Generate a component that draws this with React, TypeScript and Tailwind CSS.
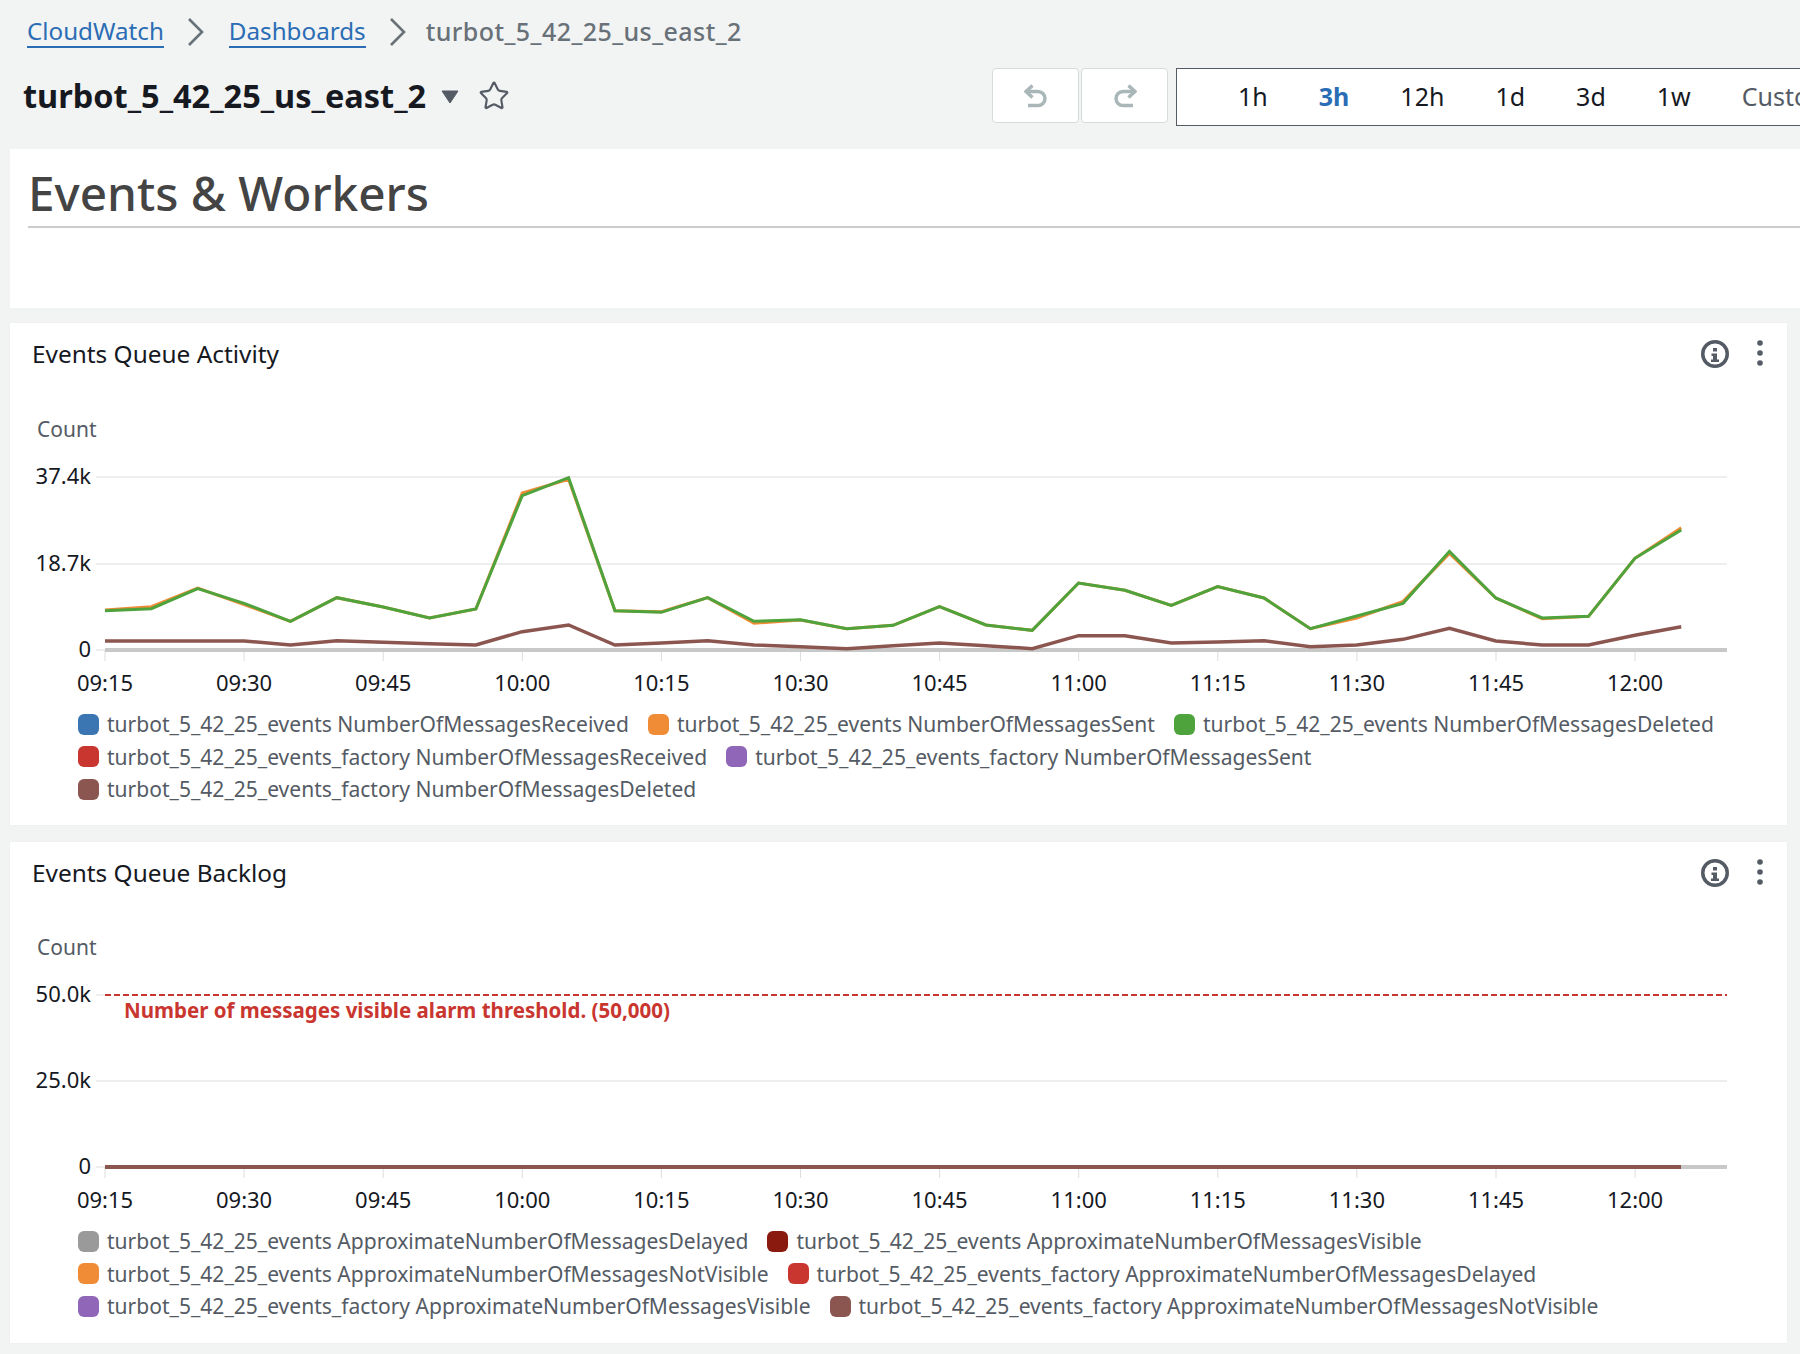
import { Star } from "lucide-react";

const greenY = [632, 626, 566, 610, 664, 593, 621, 654, 627, 287, 233, 632, 637, 593, 664, 659, 686, 676, 620, 675, 691, 549, 571, 616, 560, 594, 686, 648, 610, 454, 594, 654, 649, 475, 390];
const orangeY = [630, 620, 564, 614, 664, 593, 621, 654, 627, 279, 238, 632, 635, 593, 670, 660, 686, 676, 620, 675, 691, 549, 571, 616, 560, 594, 686, 654, 604, 460, 594, 656, 649, 475, 383];
const brownY = [723, 723, 723, 723, 735, 722, 727, 731, 735, 695, 675, 735, 729, 722, 735, 740, 746, 737, 729, 737, 746, 707, 707, 729, 726, 722, 740, 735, 718, 685, 723, 735, 735, 706, 680];

const times = ["09:15", "09:30", "09:45", "10:00", "10:15", "10:30", "10:45", "11:00", "11:15", "11:30", "11:45", "12:00"];

const stepX = 46.36;
const tickX = 139.1;
const plotLeft = 95;
const plotRight = 1717;

// zoomed y values -> svg local y
const toPoints = (ys: number[]) =>
  ys.map((y, i) => `${plotLeft + i * stepX},${y / 3 - 9}`).join(" ");

function ChartFrame({
  height,
  top,
  mid,
  base,
  topLabel,
  midLabel,
  labelY,
  countY,
  children,
}: {
  height: number;
  top: number;
  mid: number;
  base: number;
  topLabel: string;
  midLabel: string;
  labelY: number;
  countY: number;
  children: React.ReactNode;
}) {
  return (
    <svg width={1777} height={height} className="block">
      <text x={27} y={countY} dominantBaseline="middle" fontSize={21} fill="#545b64">Count</text>
      {[top, mid].map((y) => (
        <line key={y} x1={86} x2={plotRight} y1={y} y2={y} stroke="#eeeeee" strokeWidth={2} />
      ))}
      <line x1={86} x2={plotLeft} y1={base} y2={base} stroke="#eeeeee" strokeWidth={2} />
      <text x={81} y={top + 1} dominantBaseline="middle" textAnchor="end" fontSize={22} fill="#16191f">{topLabel}</text>
      <text x={81} y={mid + 1} dominantBaseline="middle" textAnchor="end" fontSize={22} fill="#16191f">{midLabel}</text>
      <text x={81} y={base + 1} dominantBaseline="middle" textAnchor="end" fontSize={22} fill="#16191f">0</text>
      {times.map((t, i) => (
        <g key={t}>
          <line x1={plotLeft + i * tickX} x2={plotLeft + i * tickX} y1={base} y2={base + 11} stroke="#dddddd" />
          <text x={plotLeft + i * tickX} y={labelY} dominantBaseline="middle" textAnchor="middle" fontSize={22} fill="#16191f">{t}</text>
        </g>
      ))}
      <line x1={plotLeft} x2={plotRight} y1={base} y2={base} stroke="#c8c8c8" strokeWidth={4} />
      {children}
    </svg>
  );
}

function Legend({ items }: { items: { color: string; label: string }[] }) {
  return (
    <div className="flex flex-wrap w-[1660px] ml-[68px] gap-x-[19px] text-[21.05px] leading-[32.5px] text-[#545b64]">
      {items.map((item) => (
        <div key={item.label} className="flex items-center gap-[8px] whitespace-nowrap">
          <span className={`w-[21px] h-[21px] rounded-[6px] ${item.color}`} />
          {item.label}
        </div>
      ))}
    </div>
  );
}

function Widget({ title, height, children }: { title: string; height: string; children: React.ReactNode }) {
  return (
    <section className={`w-[1777px] ml-[10px] bg-white shadow-[0_0_1px_rgba(0,0,0,0.08)] ${height}`}>
      <div className="h-[86px] flex items-start justify-between pl-[22px] pr-[22px] pt-[14px]">
        <h2 className="text-[24.4px] leading-[34px] text-[#16191f]">{title}</h2>
        <div className="flex items-center gap-[25px] pt-[2px]">
          <svg width="30" height="30" viewBox="0 0 30 30" fill="none">
            <circle cx="15" cy="15" r="12.25" stroke="#545b64" strokeWidth="3.5" />
            <rect x="13" y="9" width="4" height="3.5" fill="#545b64" />
            <path d="M11.5 14.5h5.5v6h2v2.5h-8v-2.5h2v-3.5h-1.5z" fill="#545b64" />
          </svg>
          <svg width="10" height="30" viewBox="0 0 10 30" fill="#545b64">
            <circle cx="5" cy="4" r="2.8" />
            <circle cx="5" cy="14" r="2.8" />
            <circle cx="5" cy="24" r="2.8" />
          </svg>
        </div>
      </div>
      {children}
    </section>
  );
}

function Chevron({ className }: { className: string }) {
  return (
    <svg width="18" height="28" viewBox="0 0 18 28" fill="none" stroke="#687078" strokeWidth="2.6" className={className}>
      <path d="M2 1l13 13L2 27" />
    </svg>
  );
}

export default function App() {
  return (
    <div className="w-[1800px] h-[1354px] overflow-hidden bg-[#f2f3f3] font-['Noto_Sans',sans-serif]">
      <nav className="h-[62px] flex items-center pl-[27px] pt-[1px] text-[24.2px]">
        <a className="text-[#2b6db5] border-b-2 border-[#2b6db5] leading-[30px]">CloudWatch</a>
        <Chevron className="ml-[23px] mr-[24px]" />
        <a className="text-[#2b6db5] border-b-2 border-[#2b6db5] leading-[30px]">Dashboards</a>
        <Chevron className="ml-[23px] mr-[19px]" />
        <span className="text-[#687078] font-medium text-[25px] tracking-[0.45px]">turbot_5_42_25_us_east_2</span>
      </nav>

      <header className="h-[87px] flex items-start pl-[23px]">
        <h1 className="text-[32.5px] leading-[68px] font-bold text-[#16191f]">turbot_5_42_25_us_east_2</h1>
        <svg width="18" height="14" viewBox="0 0 18 14" fill="#545b64" stroke="#545b64" strokeWidth="1" strokeLinejoin="round" className="ml-[15px] mt-[28px]">
          <path d="M1 1h16L9 13z" />
        </svg>
        <Star size={32} strokeWidth={1.6} className="ml-[19px] mt-[18px] text-[#545b64]" />
        <div className="ml-auto flex mt-[6px]">
          <div className="flex gap-[2px]">
            <button className="w-[87px] h-[55px] bg-white border border-[#d5dbdb] rounded-[4px] flex items-center justify-center">
              <svg width="24" height="24" viewBox="0 0 24 24" fill="none" stroke="#aab7b8" strokeWidth="3.5">
                <path d="M2 7.5h12a7 7 0 0 1 0 14H4" />
                <path d="M8.5 1.5L2 7.5l6.5 6" />
              </svg>
            </button>
            <button className="w-[87px] h-[55px] bg-white border border-[#d5dbdb] rounded-[4px] flex items-center justify-center">
              <svg width="24" height="24" viewBox="0 0 24 24" fill="none" stroke="#aab7b8" strokeWidth="3.5">
                <path d="M22 7.5H10a7 7 0 0 0 0 14h10" />
                <path d="M15.5 1.5l6.5 6-6.5 6" />
              </svg>
            </button>
          </div>
          <div className="w-[624px] h-[58px] ml-[8px] bg-white border border-r-0 border-[#545b64] flex items-center text-[25px] text-[#16191f] overflow-hidden pl-[61px] gap-[51px] whitespace-nowrap">
            <span>1h</span>
            <span className="font-bold text-[#2b6db5]">3h</span>
            <span>12h</span>
            <span>1d</span>
            <span>3d</span>
            <span>1w</span>
            <span className="text-[#545b64]">Custom</span>
          </div>
        </div>
      </header>

      <div className="h-[159px] ml-[10px] bg-white pt-[12px] pl-[18px]">
        <h1 className="text-[47.7px] leading-[64px] font-medium text-[#444444] border-b-2 border-[#cccccc] h-[67px]">Events &amp; Workers</h1>
      </div>

      <div className="flex flex-col gap-[17px] mt-[15px]">
        <Widget title="Events Queue Activity" height="h-[502px]">
          <ChartFrame height={299} top={68} mid={155} base={241} topLabel="37.4k" midLabel="18.7k" labelY={276} countY={22}>
            <polyline points={toPoints(orangeY)} fill="none" stroke="#f08c36" strokeWidth={3} />
            <polyline points={toPoints(greenY)} fill="none" stroke="#4fa33d" strokeWidth={3} />
            <polyline points={toPoints(brownY)} fill="none" stroke="#8c5650" strokeWidth={3.5} />
          </ChartFrame>
          <Legend
            items={[
              { color: "bg-[#3b76b3]", label: "turbot_5_42_25_events NumberOfMessagesReceived" },
              { color: "bg-[#f08c36]", label: "turbot_5_42_25_events NumberOfMessagesSent" },
              { color: "bg-[#4fa33d]", label: "turbot_5_42_25_events NumberOfMessagesDeleted" },
              { color: "bg-[#c9362f]", label: "turbot_5_42_25_events_factory NumberOfMessagesReceived" },
              { color: "bg-[#9067b8]", label: "turbot_5_42_25_events_factory NumberOfMessagesSent" },
              { color: "bg-[#8c5650]", label: "turbot_5_42_25_events_factory NumberOfMessagesDeleted" },
            ]}
          />
        </Widget>

        <Widget title="Events Queue Backlog" height="h-[501px]">
          <ChartFrame height={297} top={67} mid={153} base={239} topLabel="50.0k" midLabel="25.0k" labelY={274} countY={21}>
            <line x1={plotLeft} x2={plotRight} y1={67} y2={67} stroke="#ffffff" strokeWidth={2} />
            <line x1={plotLeft} x2={plotRight} y1={67} y2={67} stroke="#c9362f" strokeWidth={2} strokeDasharray="6 3" />
            <text x={114} y={84} dominantBaseline="middle" fontSize={20.5} fontWeight={700} fill="#c9362f">
              Number of messages visible alarm threshold. (50,000)
            </text>
            <line x1={plotLeft} x2={1671} y1={239} y2={239} stroke="#8c5650" strokeWidth={4} />
          </ChartFrame>
          <Legend
            items={[
              { color: "bg-[#9a9a9a]", label: "turbot_5_42_25_events ApproximateNumberOfMessagesDelayed" },
              { color: "bg-[#8a1a10]", label: "turbot_5_42_25_events ApproximateNumberOfMessagesVisible" },
              { color: "bg-[#f08c36]", label: "turbot_5_42_25_events ApproximateNumberOfMessagesNotVisible" },
              { color: "bg-[#c9362f]", label: "turbot_5_42_25_events_factory ApproximateNumberOfMessagesDelayed" },
              { color: "bg-[#9067b8]", label: "turbot_5_42_25_events_factory ApproximateNumberOfMessagesVisible" },
              { color: "bg-[#8c5650]", label: "turbot_5_42_25_events_factory ApproximateNumberOfMessagesNotVisible" },
            ]}
          />
        </Widget>
      </div>
    </div>
  );
}
